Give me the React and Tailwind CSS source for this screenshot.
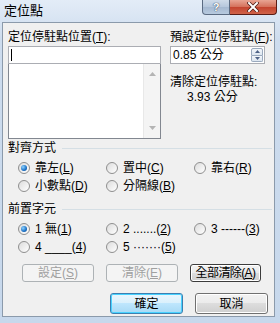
const font = { fontFamily: '"Liberation Sans", "Noto Sans CJK TC", sans-serif' };

function Radio({ checked, children }) {
  return (
    <div className="flex items-center h-[18px] gap-[5px]">
      <span
        className={
          "w-[12px] h-[12px] rounded-full border border-[#8f8f8f] flex items-center justify-center " +
          "bg-[linear-gradient(135deg,#dcdcdc,#ffffff)]"
        }
      >
        {checked && (
          <span className="w-[6px] h-[6px] rounded-full bg-[radial-gradient(circle_at_35%_35%,#8fd3ff,#1a6fc4_60%,#0b4a8c)]" />
        )}
      </span>
      <span className="leading-[12px] text-[12px] text-black whitespace-nowrap">{children}</span>
    </div>
  );
}

function Btn({ children, disabled, dark, primary, className = "" }) {
  return (
    <div
      className={
        "flex items-center justify-center rounded-[3px] border text-[12px] leading-[12px] whitespace-nowrap " +
        (disabled
          ? "border-[#adb2b5] bg-[#f4f4f4] text-[#a0a0a0] "
          : primary
          ? "border-[#3c7fb1] shadow-[inset_0_0_0_1px_#48d2ff] bg-[linear-gradient(#eaf6fd,#d9f0fc_50%,#bee6fd_50%,#a7d9f5)] text-black "
          : dark
          ? "border-[#3c3c3c] shadow-[inset_0_0_0_1px_#fff] bg-[linear-gradient(#f2f2f2,#ebebeb_50%,#dddddd_50%,#cfcfcf)] text-black "
          : "border-[#707070] shadow-[inset_0_0_0_1px_#fff] bg-[linear-gradient(#f2f2f2,#ebebeb_50%,#dddddd_50%,#cfcfcf)] text-black ") +
        className
      }
    >
      {children}
    </div>
  );
}

function GroupTitle({ children }) {
  return (
    <div className="flex items-center h-[12px]">
      <span className="text-[12px] leading-[12px] whitespace-nowrap">{children}</span>
      <span className="flex-1 ml-[6px] h-px bg-[#d5dfe5]" />
    </div>
  );
}

export default function App() {
  return (
    <div
      className="w-[280px] h-[323px] overflow-hidden flex flex-col bg-[linear-gradient(#e3ecf7,#cddcee_40px,#c7d8ec)] text-black"
      style={font}
    >
      {/* title bar */}
      <div className="h-[22px] flex items-start shrink-0">
        <div className="pl-[4px] pt-[4px] text-[13px] leading-[14px] text-black">定位點</div>
        <div className="ml-auto mr-[3px] flex">
          <div className="w-[28px] h-[15px] border border-[#5b6b82] border-t-0 rounded-bl-[4px] bg-[linear-gradient(#cfdbe9,#b6c7dc_50%,#a5b8d0_50%,#b7cadf)] flex items-center justify-center">
            <span className="text-white text-[11px] leading-[11px] font-bold [text-shadow:0_0_1px_#33415a,0_0_1px_#33415a]">?</span>
          </div>
          <div className="w-[47px] h-[15px] border border-[#5a1d16] border-t-0 border-l-0 rounded-br-[4px] bg-[linear-gradient(#e8a493,#d4705a_50%,#c3422d_50%,#d0644a)] flex items-center justify-center">
            <svg width="12" height="10" viewBox="0 0 12 10">
              <path d="M2 1 L10 9 M10 1 L2 9" stroke="#4a1a14" strokeWidth="3.4" strokeLinecap="square" />
              <path d="M2 1 L10 9 M10 1 L2 9" stroke="#ffffff" strokeWidth="2" strokeLinecap="square" />
            </svg>
          </div>
        </div>
      </div>

      {/* client */}
      <div className="ml-[2px] mr-[5px] h-[295px] border border-[#8b9aab] bg-[#f0f0f0] shrink-0">
        <div className="pt-[8px] pl-[5px] flex">
          {/* left column */}
          <div className="w-[153px] flex flex-col">
            <div className="h-[15px] text-[12px] leading-[12px]">
              定位停駐點位置(<u>T</u>):
            </div>
            <div className="h-[18px] border border-[#abadb3] bg-white flex items-center pl-[2px]">
              <span className="w-px h-[12px] bg-black" />
            </div>
            <div className="h-[75px] border border-[#828790] border-t-0 bg-white flex justify-end">
              <div className="w-[17px] bg-[#f4f4f4] border-l border-[#e8e8e8] flex flex-col items-center justify-between py-[8px]">
                <svg width="7" height="4" viewBox="0 0 7 4"><path d="M0 4 L3.5 0 L7 4Z" fill="#b4b4b4" /></svg>
                <svg width="7" height="4" viewBox="0 0 7 4"><path d="M0 0 L3.5 4 L7 0Z" fill="#b4b4b4" /></svg>
              </div>
            </div>
          </div>
          {/* right column */}
          <div className="ml-[9px] w-[95px] flex flex-col">
            <div className="h-[15px] text-[12px] leading-[12px] whitespace-nowrap">
              預設定位停駐點(<u>F</u>):
            </div>
            <div className="h-[18px] border border-[#abadb3] bg-white flex items-center">
              <span className="pl-[2px] text-[12px] leading-[12px] flex-1">0.85 公分</span>
              <div className="w-[12px] h-[14px] mr-[1px] flex flex-col">
                <div className="flex-1 border border-[#9aa9bd] rounded-t-[2px] bg-[linear-gradient(#f3f6fa,#dde6f0)] flex items-center justify-center">
                  <svg width="5" height="3" viewBox="0 0 5 3"><path d="M0 3 L2.5 0 L5 3Z" fill="#4d6185" /></svg>
                </div>
                <div className="flex-1 border border-t-0 border-[#9aa9bd] rounded-b-[2px] bg-[linear-gradient(#f3f6fa,#dde6f0)] flex items-center justify-center">
                  <svg width="5" height="3" viewBox="0 0 5 3"><path d="M0 0 L2.5 3 L5 0Z" fill="#4d6185" /></svg>
                </div>
              </div>
            </div>
            <div className="mt-[12px] text-[12px] leading-[12px] whitespace-nowrap">清除定位停駐點:</div>
            <div className="mt-[3px] pl-[17px] text-[12px] leading-[12px] whitespace-nowrap">3.93 公分</div>
          </div>
        </div>

        <div className="pl-[5px] pr-[2px] mt-[3px]">
          <GroupTitle>對齊方式</GroupTitle>
          <div className="mt-[5px] ml-[10px] grid grid-cols-[88px_88px_88px]">
            <Radio checked>靠左(<u>L</u>)</Radio>
            <Radio>置中(<u>C</u>)</Radio>
            <Radio>靠右(<u>R</u>)</Radio>
            <Radio>小數點(<u>D</u>)</Radio>
            <Radio>分隔線(<u>B</u>)</Radio>
          </div>

          <div className="mt-[8px]">
            <GroupTitle>前置字元</GroupTitle>
          </div>
          <div className="mt-[5px] ml-[10px] grid grid-cols-[88px_88px_88px]">
            <Radio checked>1 無(<u>1</u>)</Radio>
            <Radio>2 .......(<u>2</u>)</Radio>
            <Radio>3 ------(<u>3</u>)</Radio>
            <Radio>4 ____(<u>4</u>)</Radio>
            <Radio>5 ·······(<u>5</u>)</Radio>
          </div>

          <div className="mt-[8px] ml-[14px] flex gap-[12px]">
            <Btn disabled className="w-[72px] h-[18px]">設定(<u>S</u>)</Btn>
            <Btn disabled className="w-[72px] h-[18px]">清除(<u>E</u>)</Btn>
            <Btn dark className="w-[71px] h-[18px] tracking-[-0.6px]">全部清除(<u>A</u>)</Btn>
          </div>

          <div className="mt-[11px] flex justify-end gap-[12px] pr-[4px]">
            <Btn primary className="w-[73px] h-[21px]">確定</Btn>
            <Btn className="w-[73px] h-[21px]">取消</Btn>
          </div>
        </div>
      </div>
    </div>
  );
}
